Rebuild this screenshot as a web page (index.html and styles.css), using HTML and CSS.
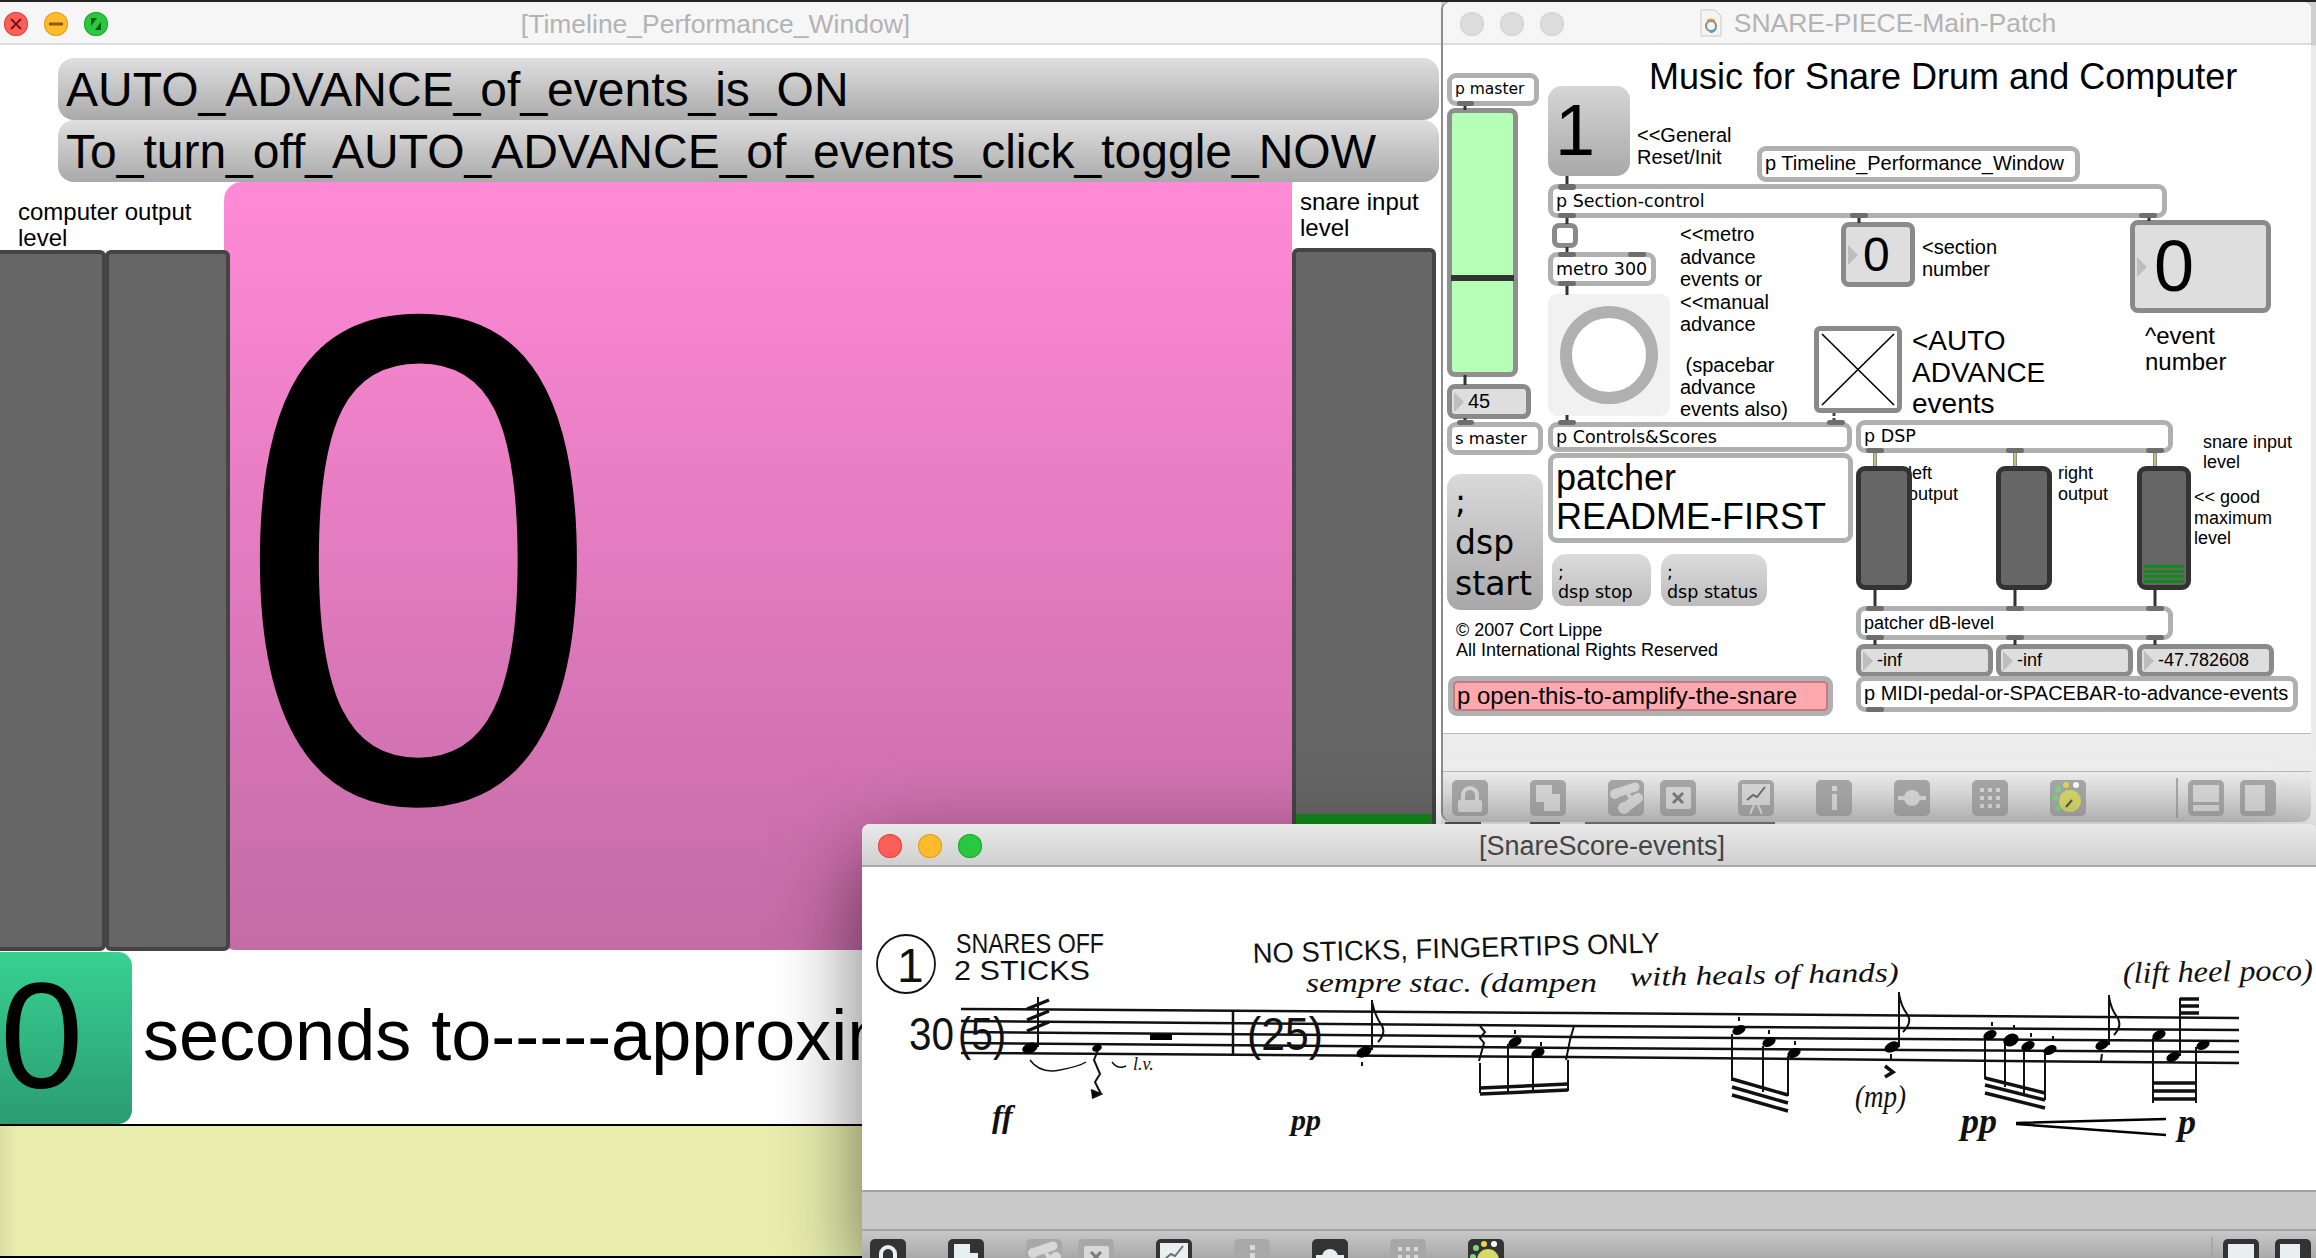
FILE: index.html
```html
<!DOCTYPE html>
<html lang="en">
<head>
  <meta charset="UTF-8" />
  <title>Music for Snare Drum and Computer</title>
  <link rel="stylesheet" href="styles.css">
</head>
<body>

  <!-- toolbar glyphs, shared by both patcher windows -->
  <svg class="defs" aria-hidden="true">
    <symbol id="i-lock" viewBox="0 0 36 36">
      <path d="M11 21v-6a7 7 0 0 1 14 0v6" fill="none" stroke="currentColor" stroke-width="4"/>
      <rect x="6" y="20" width="24" height="12" rx="2" fill="currentColor"/>
    </symbol>
    <symbol id="i-new" viewBox="0 0 36 36">
      <path d="M6 5h16v9h8v17H14v-9H6z" fill="currentColor"/>
    </symbol>
    <symbol id="i-bino" viewBox="0 0 36 36">
      <path d="M9 13L27 7" stroke="currentColor" stroke-width="9" stroke-linecap="round"/>
      <path d="M18 27L30 18" stroke="currentColor" stroke-width="10" stroke-linecap="round"/>
      <circle cx="7" cy="14" r="5" fill="currentColor"/>
      <circle cx="16" cy="28" r="6" fill="currentColor"/>
      <path d="M20 14l4 6" stroke="currentColor" stroke-width="4"/>
    </symbol>
    <symbol id="i-x" viewBox="0 0 36 36">
      <rect x="6" y="7" width="25" height="22" rx="2" fill="currentColor"/>
      <path d="M13 13l10 10M23 13L13 23" stroke="#7d7d7d" stroke-width="3"/>
    </symbol>
    <symbol id="i-chart" viewBox="0 0 36 36">
      <rect x="4" y="4" width="28" height="21" fill="currentColor"/>
      <path d="M9 20l6-5 4 2 8-10" fill="none" stroke="#6f6f6f" stroke-width="2"/>
      <path d="M16 25l-4 9M20 25l4 9" stroke="currentColor" stroke-width="2"/>
    </symbol>
    <symbol id="i-info" viewBox="0 0 36 36">
      <rect x="16" y="6" width="5" height="5" fill="currentColor"/>
      <rect x="16" y="14" width="5" height="16" fill="currentColor"/>
    </symbol>
    <symbol id="i-debug" viewBox="0 0 36 36">
      <rect x="4" y="16" width="28" height="4" fill="currentColor"/>
      <circle cx="18" cy="18" r="8" fill="currentColor"/>
    </symbol>
    <symbol id="i-grid" viewBox="0 0 36 36">
      <g fill="currentColor">
        <rect x="8" y="8" width="4" height="4"/><rect x="16" y="8" width="4" height="4"/><rect x="24" y="8" width="4" height="4"/>
        <rect x="8" y="16" width="4" height="4"/><rect x="16" y="16" width="4" height="4"/><rect x="24" y="16" width="4" height="4"/>
        <rect x="8" y="24" width="4" height="4"/><rect x="16" y="24" width="4" height="4"/><rect x="24" y="24" width="4" height="4"/>
      </g>
    </symbol>
    <symbol id="i-dial" viewBox="0 0 36 36">
      <circle cx="20" cy="21" r="11" fill="#d8d86a"/>
      <path d="M16 27l6-7" stroke="#555" stroke-width="2"/>
      <circle cx="16" cy="5" r="3" fill="#e8d84a"/>
      <circle cx="26" cy="5" r="3" fill="#fff"/>
      <circle cx="8" cy="9" r="3" fill="#7fd67f"/>
      <circle cx="5" cy="18" r="3" fill="#7fd67f"/>
      <circle cx="8" cy="28" r="3" fill="#7fd67f"/>
    </symbol>
    <symbol id="i-bottom" viewBox="0 0 36 36">
      <rect x="5" y="5" width="26" height="17" fill="currentColor"/>
      <rect x="5" y="25" width="26" height="6" fill="currentColor"/>
    </symbol>
    <symbol id="i-side" viewBox="0 0 36 36">
      <rect x="5" y="5" width="20" height="26" fill="currentColor"/>
    </symbol>
  </svg>

  <div class="top-strip"></div>

  <!-- Timeline window -->
  <section class="window win-timeline">
    <header class="titlebar">
      <div class="lights">
        <span class="light red"><svg viewBox="0 0 24 24"><path d="M7 7l10 10M17 7L7 17" stroke="#7a1512" stroke-width="2"/></svg></span>
        <span class="light yellow"><svg viewBox="0 0 24 24"><path d="M5 12h14" stroke="#8f5a08" stroke-width="3"/></svg></span>
        <span class="light green"><svg viewBox="0 0 24 24"><path d="M7 6h6L7 14zM17 18h-6l6-8z" fill="#0b5a14"/></svg></span>
      </div>
      <div class="title faded">[Timeline_Performance_Window]</div>
    </header>
    <div class="patch">
      <div class="bigmsg bigmsg-1">AUTO_ADVANCE_of_events_is_ON</div>
      <div class="bigmsg bigmsg-2">To_turn_off_AUTO_ADVANCE_of_events_click_toggle_NOW</div>
      <div class="pink"><span class="pink-num">0</span></div>
      <div class="label label-compout">computer output<br>level</div>
      <div class="label label-snarein">snare input<br>level</div>
      <div class="tall-meter meter-a"></div>
      <div class="tall-meter meter-b"></div>
      <div class="tall-meter meter-c"><div class="meter-c-level"></div></div>
      <div class="count-box"><span>0</span></div>
      <div class="seconds">seconds to-----approxim</div>
      <div class="yellow-band"></div>
    </div>
  </section>

  <!-- Main patch window -->
  <section class="window win-main">
    <header class="titlebar">
      <div class="lights">
        <span class="light off"></span>
        <span class="light off"></span>
        <span class="light off"></span>
      </div>
      <div class="title title-main faded">
        <svg class="doc-icon" viewBox="0 0 22 28">
          <path d="M1 1h14l6 6v20H1z" fill="#f4f4f4" stroke="#c9c9c9"/>
          <circle cx="11" cy="17" r="5" fill="none" stroke="#8a8a8a" stroke-width="2"/>
          <path d="M7 12a6 6 0 0 1 8 0" fill="none" stroke="#d9a23a" stroke-width="2"/>
          <path d="M16 19a6 6 0 0 1-6 4" fill="none" stroke="#4aa3c9" stroke-width="2"/>
        </svg>
        SNARE-PIECE-Main-Patch
      </div>
    </header>
    <div class="patch">
      <div class="heading">Music for Snare Drum and Computer</div>

      <div class="obj lucida o-pmaster">p master</div>
      <div class="slider o-slider"><div class="knob"></div></div>
      <div class="num o-45"><i></i>45</div>
      <div class="obj lucida o-smaster">s master</div>

      <div class="msg o-one">1</div>
      <div class="note o-general">&lt;&lt;General<br>Reset/Init</div>
      <div class="obj o-ptimeline">p Timeline_Performance_Window</div>
      <div class="obj lucida o-section">p Section-control</div>
      <div class="tgl o-tgl"></div>
      <div class="obj lucida o-metro">metro 300</div>
      <div class="bang o-bang"><div class="bang-ring"></div></div>
      <div class="note o-metronote">&lt;&lt;metro<br>advance<br>events or<br>&lt;&lt;manual<br>advance</div>
      <div class="note o-spacebar">&nbsp;(spacebar<br>advance<br>events also)</div>

      <div class="num num-mid o-sec0"><i></i>0</div>
      <div class="note o-secnote">&lt;section<br>number</div>
      <div class="num num-big o-ev0"><i></i>0</div>
      <div class="note note-24 o-evnote">^event<br>number</div>

      <div class="xbox o-xbox">
        <svg viewBox="0 0 78 77" preserveAspectRatio="none"><path d="M3 3l72 71M75 3L3 74" stroke="#000" stroke-width="1.6"/></svg>
      </div>
      <div class="note note-28 o-autonote">&lt;AUTO<br>ADVANCE<br>events</div>

      <div class="obj lucida o-controls">p Controls&amp;Scores</div>
      <div class="obj lucida o-dsp">p DSP</div>
      <div class="obj o-readme">patcher<br>README-FIRST</div>

      <div class="msg msg-dsp o-dspstart">;<br>dsp<br>start</div>
      <div class="msg msg-small o-dspstop">;<br>dsp stop</div>
      <div class="msg msg-small o-dspstatus">;<br>dsp status</div>

      <div class="note note-18 o-copy">© 2007 Cort Lippe<br>All International Rights Reserved</div>
      <div class="obj o-red">p open-this-to-amplify-the-snare</div>

      <div class="note note-18 o-leftnote">left<br>output</div>
      <div class="note note-18 o-rightnote">right<br>output</div>
      <div class="note note-18 o-snarenote">snare input<br>level</div>
      <div class="note note-18 o-goodnote">&lt;&lt; good<br>maximum<br>level</div>

      <div class="meter o-m1"></div>
      <div class="meter o-m2"></div>
      <div class="meter o-m3"><b></b><b></b><b></b><b></b></div>

      <div class="obj lucida-ish o-db">patcher dB-level</div>
      <div class="num num-small o-inf1"><i></i>-inf</div>
      <div class="num num-small o-inf2"><i></i>-inf</div>
      <div class="num num-small o-inf3"><i></i>-47.782608</div>
      <div class="obj o-midi">p MIDI-pedal-or-SPACEBAR-to-advance-events</div>

      <!-- patch cords and inlets/outlets, in page coordinates -->
      <svg class="cords" viewBox="1443 45 868 686">
        <g stroke="#333" stroke-width="3">
          <path d="M1465 104v6M1465 375v10M1465 418v6"/>
          <path d="M1567 176v10M1567 218v6M1567 247v7M1567 285v10M1567 415v8"/>
          <path d="M1859 217v6M2149 217v4"/>
          <path d="M1875 590v17M2015 590v17M2155 590v17"/>
          <path d="M1875 639v6M2015 639v6M2155 639v6"/>
        </g>
        <path d="M1834 413v10" stroke="#444" stroke-width="3" stroke-dasharray="3 2"/>
        <g stroke="#666" stroke-width="3.5">
          <path d="M1875 453v13M2015 453v13M2155 453v13"/>
        </g>
        <g stroke="#d6e67c" stroke-width="1.5">
          <path d="M1875 453v13M2015 453v13M2155 453v13"/>
        </g>
        <g fill="#6e6e6e">
          <rect x="1457" y="101" width="17" height="5" rx="2.5"/>
          <rect x="1457" y="420" width="17" height="5" rx="2.5"/>
          <rect x="1558" y="184" width="18" height="6" rx="3"/>
          <rect x="1558" y="213" width="18" height="5" rx="2.5"/>
          <rect x="1850" y="213" width="18" height="5" rx="2.5"/>
          <rect x="2139" y="213" width="18" height="5" rx="2.5"/>
          <rect x="1558" y="252" width="18" height="5" rx="2.5"/>
          <rect x="1628" y="252" width="18" height="5" rx="2.5"/>
          <rect x="1558" y="281" width="18" height="5" rx="2.5"/>
          <rect x="1558" y="420" width="18" height="5" rx="2.5"/>
          <rect x="1827" y="420" width="18" height="5" rx="2.5"/>
          <rect x="1866" y="448" width="18" height="5" rx="2.5"/>
          <rect x="2006" y="448" width="18" height="5" rx="2.5"/>
          <rect x="2146" y="448" width="18" height="5" rx="2.5"/>
          <rect x="1866" y="606" width="18" height="5" rx="2.5"/>
          <rect x="2006" y="606" width="18" height="5" rx="2.5"/>
          <rect x="2146" y="606" width="18" height="5" rx="2.5"/>
          <rect x="1866" y="635" width="18" height="5" rx="2.5"/>
          <rect x="2006" y="635" width="18" height="5" rx="2.5"/>
          <rect x="2146" y="635" width="18" height="5" rx="2.5"/>
          <rect x="1866" y="707" width="18" height="5" rx="2.5"/>
        </g>
      </svg>
    </div>
    <div class="status-panel"></div>
    <footer class="toolbar toolbar-faded">
      <div class="tool"><svg><use href="#i-lock"/></svg></div>
      <div class="tool"><svg><use href="#i-new"/></svg></div>
      <div class="tool tool-tight"><svg><use href="#i-bino"/></svg></div>
      <div class="tool"><svg><use href="#i-x"/></svg></div>
      <div class="tool"><svg><use href="#i-chart"/></svg></div>
      <div class="tool"><svg><use href="#i-info"/></svg></div>
      <div class="tool"><svg><use href="#i-debug"/></svg></div>
      <div class="tool"><svg><use href="#i-grid"/></svg></div>
      <div class="tool tool-dial"><svg><use href="#i-dial"/></svg></div>
      <div class="tool-sep"></div>
      <div class="tool tool-small-gap"><svg><use href="#i-bottom"/></svg></div>
      <div class="tool tool-last"><svg><use href="#i-side"/></svg></div>
    </footer>
  </section>
  <div class="sliver"></div>

  <!-- Score window -->
  <section class="window win-score">
    <header class="titlebar titlebar-active">
      <div class="lights lights-score">
        <span class="light red"></span>
        <span class="light yellow"></span>
        <span class="light green"></span>
      </div>
      <div class="title">[SnareScore-events]</div>
    </header>
    <svg class="score" viewBox="862 867 1454 323">
      <g class="staff">
        <path d="M961 1009L1574 1013L2239 1018"/>
        <path d="M961 1021L1574 1026L2239 1030"/>
        <path d="M961 1032L1574 1037L2239 1041"/>
        <path d="M961 1043L1574 1048L2239 1052"/>
        <path d="M961 1053L1574 1057L2239 1063"/>
        <path d="M1233 1010v46"/>
      </g>

      <!-- handwritten directions -->
      <circle cx="906" cy="964" r="29" class="thin"/>
      <text x="897" y="982" class="hand h-one">1</text>
      <text x="956" y="953" class="hand h-caps" textLength="148" lengthAdjust="spacingAndGlyphs">SNARES OFF</text>
      <text x="954" y="980" class="hand h-caps" textLength="136" lengthAdjust="spacingAndGlyphs">2 STICKS</text>
      <text transform="translate(1253 963) rotate(-1.5)" class="hand h-caps" textLength="407" lengthAdjust="spacingAndGlyphs">NO STICKS, FINGERTIPS ONLY</text>
      <text x="1306" y="992" class="script" textLength="291" lengthAdjust="spacingAndGlyphs">sempre stac. (dampen</text>
      <text transform="translate(1630 986) rotate(-1)" class="script" textLength="269" lengthAdjust="spacingAndGlyphs">with heals of hands)</text>
      <text transform="translate(2123 983) rotate(-1)" class="script script-tall" textLength="190" lengthAdjust="spacingAndGlyphs">(lift heel poco)</text>

      <text x="909" y="1050" class="hand h-num" textLength="45" lengthAdjust="spacingAndGlyphs">30</text>
      <text x="958" y="1050" class="hand h-num" textLength="48" lengthAdjust="spacingAndGlyphs">(5)</text>
      <text x="1247" y="1050" class="hand h-num" textLength="76" lengthAdjust="spacingAndGlyphs">(25)</text>
      <text x="1133" y="1070" class="script script-small">l.v.</text>

      <text x="992" y="1127" class="dyn dyn-ff">ff</text>
      <text x="1291" y="1130" class="dyn dyn-small">pp</text>
      <text x="1855" y="1107" class="script dyn-mp" textLength="51" lengthAdjust="spacingAndGlyphs">(mp)</text>
      <text x="1961" y="1133" class="dyn">pp</text>
      <text x="2178" y="1134" class="dyn">p</text>

      <!-- first bar: note with tremolo, tie and grace note -->
      <g class="stem">
        <path d="M1038 997v50"/>
        <path d="M1027 1009l22-9M1027 1020l22-9M1027 1031l22-9" class="beam"/>
        <path d="M1098 1050l-4 10 6 14-5 8 6 12" fill="none"/>
        <path d="M1091 1090l10 4-9 4"/>
        <path d="M1030 1060q10 14 30 10t26-8" fill="none" class="fine"/>
        <path d="M1112 1062q6 8 14 4" fill="none" class="fine"/>
      </g>
      <ellipse cx="1030" cy="1048" rx="8" ry="5" transform="rotate(-20 1030 1048)"/>
      <ellipse cx="1097" cy="1048" rx="5" ry="3.5" transform="rotate(-20 1097 1048)"/>
      <rect x="1150" y="1034" width="22" height="6"/>

      <!-- second bar -->
      <g class="stem">
        <path d="M1372 1000v50M1372 1002q3 14 9 22t-3 18" fill="none"/>
        <path d="M1362 1062v4"/>
        <path d="M1480 1063v30M1508 1044v48M1533 1054v37M1568 1060v31"/>
        <path d="M1480 1026l5 6-5 6 4 5-5 18M1574 1026l-4 14-4 20" fill="none"/>
        <path d="M1480 1088l88-4M1480 1094l88-4" class="beam"/>
        <path d="M1515 1030v4M1541 1042v4"/>

        <path d="M1732 1034v47M1763 1046v46M1788 1056v40"/>
        <path d="M1732 1079l56 16M1732 1087l56 16M1732 1095l56 16" class="beam"/>
        <path d="M1739 1017v4M1769 1030v4M1795 1041v4"/>

        <path d="M1899 992v55M1899 994q2 12 8 20t-4 18" fill="none"/>
        <path d="M1891 1054v6"/>
        <path d="M1885 1066l8 6-8 5" fill="none" class="beam"/>

        <path d="M1985 1037v42M2005 1043v44M2024 1049v44M2045 1054v46"/>
        <path d="M1985 1078l60 15M1985 1085l60 15M1985 1093l60 15" class="beam"/>
        <path d="M1992 1022v4M2014 1025v4M2031 1033v4M2053 1036v4"/>

        <path d="M2109 995v50M2109 997q2 12 8 20t-3 18" fill="none"/>
        <path d="M2102 1054l-1 7"/>

        <path d="M2153 1038v65M2196 1047v56M2180 998v58"/>
        <path d="M2153 1083h43M2153 1091h43M2153 1099h43" class="beam"/>
        <path d="M2180 999h19M2180 1006h19M2180 1013h19" class="beam"/>
      </g>
      <g>
        <ellipse cx="1364" cy="1052" rx="8" ry="5" transform="rotate(-25 1364 1052)"/>
        <ellipse cx="1515" cy="1042" rx="7" ry="4.5" transform="rotate(-25 1515 1042)"/>
        <ellipse cx="1538" cy="1053" rx="7" ry="4.5" transform="rotate(-25 1538 1053)"/>
        <ellipse cx="1739" cy="1030" rx="7" ry="4.5" transform="rotate(-25 1739 1030)"/>
        <ellipse cx="1769" cy="1042" rx="7" ry="4.5" transform="rotate(-25 1769 1042)"/>
        <ellipse cx="1794" cy="1053" rx="7" ry="4.5" transform="rotate(-25 1794 1053)"/>
        <ellipse cx="1892" cy="1047" rx="8" ry="5" transform="rotate(-25 1892 1047)"/>
        <ellipse cx="1990" cy="1035" rx="7" ry="4.5" transform="rotate(-25 1990 1035)"/>
        <ellipse cx="2011" cy="1040" rx="8" ry="6" transform="rotate(-25 2011 1040)"/>
        <ellipse cx="2028" cy="1046" rx="7" ry="4.5" transform="rotate(-25 2028 1046)"/>
        <ellipse cx="2050" cy="1050" rx="7" ry="4.5" transform="rotate(-25 2050 1050)"/>
        <ellipse cx="2102" cy="1045" rx="7" ry="4.5" transform="rotate(-25 2102 1045)"/>
        <ellipse cx="2159" cy="1035" rx="7" ry="4.5" transform="rotate(-25 2159 1035)"/>
        <ellipse cx="2173" cy="1057" rx="7" ry="4.5" transform="rotate(-25 2173 1057)"/>
        <ellipse cx="2203" cy="1045" rx="7" ry="4.5" transform="rotate(-25 2203 1045)"/>
      </g>
      <path d="M2016 1123L2166 1119M2016 1124L2166 1135" stroke="#000" stroke-width="2.5" fill="none"/>
    </svg>
    <div class="status-panel status-panel-score"></div>
    <footer class="toolbar toolbar-score">
      <div class="tool tool-on"><svg><use href="#i-lock"/></svg></div>
      <div class="tool tool-on"><svg><use href="#i-new"/></svg></div>
      <div class="tool tool-tight"><svg><use href="#i-bino"/></svg></div>
      <div class="tool"><svg><use href="#i-x"/></svg></div>
      <div class="tool tool-on"><svg><use href="#i-chart"/></svg></div>
      <div class="tool"><svg><use href="#i-info"/></svg></div>
      <div class="tool tool-on"><svg><use href="#i-debug"/></svg></div>
      <div class="tool"><svg><use href="#i-grid"/></svg></div>
      <div class="tool tool-on tool-dial"><svg><use href="#i-dial"/></svg></div>
      <div class="tool-sep"></div>
      <div class="tool tool-on tool-small-gap"><svg><use href="#i-bottom"/></svg></div>
      <div class="tool tool-on tool-last"><svg><use href="#i-side"/></svg></div>
    </footer>
  </section>

</body>
</html>
```

FILE: styles.css
```css
* { box-sizing: border-box; }
html, body { margin: 0; height: 100%; }
body {
  position: relative;
  width: 2316px;
  height: 1258px;
  overflow: hidden;
  background: linear-gradient(#cfcfcf 45px, #ececec 46px);
  font-family: "Liberation Sans", Arial, sans-serif;
  color: #000;
}
.defs { position: absolute; width: 0; height: 0; }
.top-strip { position: absolute; left: 0; top: 0; right: 0; height: 2px; background: #222; }

/* Windows sit on a free desktop */
.window {
  position: absolute;
  display: flex;
  flex-direction: column;
  overflow: hidden;
  background: #fff;
}
.win-timeline { left: 0; top: 2px; width: 1441px; height: 1256px; }
.win-main {
  left: 1443px;
  top: 2px;
  width: 868px;
  height: 820px;
  border-radius: 8px 8px 10px 10px;
  box-shadow: -2px 0 0 #8c8c8c;
}
.win-score {
  left: 862px;
  top: 824px;
  width: 1454px;
  height: 434px;
  border-radius: 8px 8px 0 0;
  box-shadow: 0 30px 85px rgba(0,0,0,0.55);
}
.sliver {
  position: absolute;
  left: 1445px;
  top: 822px;
  width: 330px;
  height: 2px;
  background:
    linear-gradient(90deg, #555 0 36px, transparent 36px 85px, #555 85px 115px, transparent 115px 140px, #777 140px 330px);
}

.titlebar {
  position: relative;
  flex: none;
  height: 43px;
  background: #f6f6f6;
  border-bottom: 2px solid #dcdcdc;
}
.titlebar-active {
  background: linear-gradient(#e9e9e9, #d0d0d0);
  border-bottom: 2px solid #a9a9a9;
}
.lights { position: absolute; left: 4px; top: 10px; display: flex; gap: 16px; }
.win-main .lights { left: 17px; }
.lights-score { left: 16px; top: 10px; }
.light { display: block; width: 24px; height: 24px; border-radius: 50%; }
.light svg { display: block; width: 24px; height: 24px; }
.light.red { background: #fc5f57; box-shadow: inset 0 0 0 1px #df4640; }
.light.yellow { background: #febb2e; box-shadow: inset 0 0 0 1px #dd9e22; }
.light.green { background: #28c840; box-shadow: inset 0 0 0 1px #1eaa2f; }
.light.off { background: #dcdcdc; box-shadow: inset 0 0 0 1px #d2d2d2; }
.title {
  height: 41px;
  line-height: 44px;
  text-align: center;
  font-size: 26.5px;
  color: #444;
}
.title.faded { color: #b3b3b3; }
.win-timeline .title { padding-right: 10px; }
.win-score .title { padding-left: 26px; font-size: 27px; }
.title-main {
  display: flex;
  justify-content: center;
  align-items: center;
  gap: 12px;
  padding-left: 2px;
}
.doc-icon { width: 22px; height: 28px; }

/* Patcher canvas: everything inside is a placed object */
.patch { position: relative; flex: 1; overflow: hidden; background: #fff; }

/* Timeline window objects */
.bigmsg {
  position: absolute;
  left: 58px;
  width: 1381px;
  height: 62px;
  padding-left: 8px;
  line-height: 63px;
  font-size: 48px;
  white-space: nowrap;
  border-radius: 16px;
  background: linear-gradient(#dfdfdf, #a9a9a9);
}
.bigmsg-1 { top: 13px; }
.bigmsg-2 { top: 75px; }
.pink {
  position: absolute;
  left: 224px;
  top: 137px;
  width: 1068px;
  height: 768px;
  display: flex;
  align-items: center;
  border-radius: 18px 0 0 10px;
  background: linear-gradient(#ff8ad6, #c46ba6);
}
.pink-num {
  margin: -14px 0 0 10px;
  font-size: 698px;
  line-height: 1;
  transform: scaleX(0.95);
  transform-origin: left center;
}
.label { position: absolute; font-size: 24px; line-height: 26px; }
.label-compout { left: 18px; top: 154px; }
.label-snarein { left: 1300px; top: 144px; }
.tall-meter {
  position: absolute;
  top: 205px;
  height: 701px;
  background: #666;
  border: 4px solid #444;
  border-radius: 6px;
}
.meter-a { left: -10px; width: 116px; }
.meter-b { left: 105px; width: 125px; }
.meter-c {
  left: 1292px;
  top: 203px;
  width: 144px;
  height: 800px;
}
.meter-c-level {
  position: absolute;
  left: 0;
  right: 0;
  top: 562px;
  height: 60px;
  background: #118a1a;
}
.count-box {
  position: absolute;
  left: 0;
  top: 907px;
  width: 132px;
  height: 172px;
  border-radius: 0 14px 14px 0;
  background: linear-gradient(#38d191, #2a9c72);
  font-size: 150px;
  line-height: 168px;
}
.seconds {
  position: absolute;
  left: 143px;
  top: 907px;
  height: 172px;
  line-height: 167px;
  font-size: 72px;
  white-space: nowrap;
}
.yellow-band {
  position: absolute;
  left: 0;
  right: 0;
  top: 1079px;
  height: 134px;
  border-top: 2px solid #000;
  border-bottom: 2px solid #000;
  background: linear-gradient(90deg, #dcdca2, #e9eeae 18px);
}

/* Main patch objects */
.heading {
  position: absolute;
  left: 206px;
  top: 11px;
  font-size: 36px;
  line-height: 42px;
  white-space: nowrap;
}
.obj {
  position: absolute;
  padding-left: 3px;
  background: #fff;
  border: 5px solid #b0b0b0;
  border-radius: 9px;
  white-space: nowrap;
  font-size: 20px;
  line-height: 24px;
}
.lucida { font-family: "DejaVu Sans", sans-serif; font-size: 17.5px; line-height: 24px; }
.lucida-ish { font-size: 18px; }
.note { position: absolute; font-size: 20px; line-height: 22px; white-space: nowrap; }
.note-18 { font-size: 18px; line-height: 20.5px; }
.note-24 { font-size: 24px; line-height: 26px; }
.note-28 { font-size: 28px; line-height: 31.5px; }
.msg {
  position: absolute;
  background: linear-gradient(#d6d6d6, #a9a9a9);
  border-radius: 14px;
}
.msg-dsp {
  padding: 7px 0 0 8px;
  font-family: "DejaVu Sans", sans-serif;
  font-size: 33px;
  line-height: 41px;
  background: linear-gradient(#dadada, #a8a8a8);
}
.msg-small {
  padding: 8px 0 0 6px;
  font-family: "DejaVu Sans", sans-serif;
  font-size: 17.5px;
  line-height: 20px;
  background: linear-gradient(#dcdcdc, #bcbcbc);
  white-space: nowrap;
}
.num {
  position: absolute;
  background: #dedede;
  border: 5px solid #8a8a8a;
  border-radius: 8px;
  font-size: 22px;
  line-height: 25px;
  padding-left: 16px;
  white-space: nowrap;
}
.num i {
  position: absolute;
  left: 2px;
  top: 50%;
  margin-top: -10px;
  border-left: 10px solid #bdbdbd;
  border-top: 10px solid transparent;
  border-bottom: 10px solid transparent;
}
.num-mid { font-size: 48px; line-height: 55px; padding-left: 17px; }
.num-big { font-size: 72px; line-height: 83px; padding-left: 19px; }
.num-small { font-size: 18px; line-height: 23px; padding-left: 16px; }
.slider {
  position: absolute;
  background: #b6ffb6;
  border: 5px solid #8f8f8f;
  border-radius: 8px;
}
.knob { position: absolute; left: -1px; right: -1px; top: 162px; height: 6px; background: #333; }
.tgl { position: absolute; background: #fff; border: 5px solid #8a8a8a; border-radius: 7px; }
.bang { position: absolute; display: flex; align-items: center; justify-content: center; background: #f1f1f1; border-radius: 9px; }
.bang-ring { width: 98px; height: 98px; background: #fff; border: 12px solid #b0b0b0; border-radius: 50%; }
.xbox { position: absolute; background: #fff; border: 5px solid #8a8a8a; border-radius: 6px; }
.xbox svg { display: block; width: 100%; height: 100%; }
.meter {
  position: absolute;
  top: 421px;
  width: 56px;
  height: 124px;
  padding-top: 94px;
  background: #666;
  border: 5px solid #333;
  border-radius: 9px;
}
.meter b { display: block; height: 3px; margin: 0 2px 2px; background: #118a1a; }
.cords { position: absolute; left: 0; top: 0; width: 868px; height: 686px; pointer-events: none; }

.o-pmaster { left: 4px; top: 28px; width: 92px; height: 33px; font-size: 15.5px; line-height: 22px; }
.o-slider { left: 4px; top: 63px; width: 71px; height: 269px; }
.o-45 { left: 4px; top: 339px; width: 84px; height: 35px; font-size: 20px; }
.o-smaster { left: 4px; top: 377px; width: 96px; height: 33px; font-size: 16.5px; line-height: 23px; }
.o-one {
  left: 105px;
  top: 41px;
  width: 82px;
  height: 90px;
  padding-left: 7px;
  font-size: 72px;
  line-height: 88px;
}
.o-general { left: 194px; top: 79px; }
.o-ptimeline { left: 314px; top: 101px; width: 323px; height: 36px; }
.o-section { left: 105px; top: 139px; width: 619px; height: 34px; }
.o-tgl { left: 109px; top: 178px; width: 26px; height: 25px; }
.o-metro { left: 105px; top: 207px; width: 108px; height: 34px; }
.o-bang { left: 105px; top: 249px; width: 122px; height: 122px; }
.o-metronote { left: 237px; top: 178px; line-height: 22.5px; }
.o-spacebar { left: 237px; top: 309px; }
.o-sec0 { left: 398px; top: 177px; width: 74px; height: 65px; }
.o-secnote { left: 479px; top: 191px; }
.o-ev0 { left: 687px; top: 175px; width: 141px; height: 93px; }
.o-evnote { left: 702px; top: 278px; }
.o-xbox { left: 371px; top: 281px; width: 88px; height: 87px; }
.o-autonote { left: 469px; top: 280px; }
.o-controls { left: 105px; top: 377px; width: 304px; height: 30px; line-height: 20px; }
.o-dsp { left: 413px; top: 375px; width: 317px; height: 33px; line-height: 22px; }
.o-readme { left: 105px; top: 408px; width: 305px; height: 90px; padding-top: 0; font-size: 36px; line-height: 39px; }
.o-dspstart { left: 4px; top: 429px; width: 96px; height: 136px; }
.o-dspstop { left: 109px; top: 509px; width: 99px; height: 52px; }
.o-dspstatus { left: 218px; top: 509px; width: 106px; height: 52px; }
.o-copy { left: 13px; top: 575px; line-height: 20px; }
.o-red {
  left: 5px;
  top: 631px;
  width: 385px;
  height: 40px;
  padding-left: 4px;
  font-size: 24px;
  line-height: 29px;
  background: #ffa9ae;
  border-color: #b0b0b0;
  box-shadow: inset 0 0 0 2px #c57a80;
}
.o-leftnote { left: 465px; top: 418px; }
.o-rightnote { left: 615px; top: 418px; }
.o-snarenote { left: 760px; top: 387px; line-height: 20px; }
.o-goodnote { left: 751px; top: 442px; }
.o-m1 { left: 413px; }
.o-m2 { left: 553px; }
.o-m3 { left: 694px; width: 54px; }
.o-db { left: 413px; top: 561px; width: 317px; height: 34px; }
.o-inf1 { left: 413px; top: 599px; width: 137px; height: 33px; }
.o-inf2 { left: 553px; top: 599px; width: 137px; height: 33px; }
.o-inf3 { left: 694px; top: 599px; width: 137px; height: 33px; }
.o-midi { left: 413px; top: 631px; width: 442px; height: 36px; line-height: 25px; }

/* Bottom bars */
.status-panel {
  flex: none;
  height: 39px;
  background: #ededed;
  border-top: 1px solid #b9b9b9;
  border-bottom: 1px solid #b9b9b9;
}
.status-panel-score {
  background: #c9c9c9;
  border-top: 2px solid #a3a3a3;
  border-bottom: 2px solid #a3a3a3;
  height: 41px;
}
.toolbar {
  flex: none;
  display: flex;
  align-items: flex-start;
  height: 50px;
  padding: 8px 0 0 9px;
  background: linear-gradient(#ededed, #c5c5c5);
}
.toolbar-score {
  height: 28px;
  padding-left: 8px;
  background: linear-gradient(#c8c8c8, #a8a8a8);
}
.tool {
  flex: none;
  width: 36px;
  height: 36px;
  margin-right: 42px;
  border-radius: 5px;
  background: #a8a8a8;
  color: #d8d8d8;
}
.tool svg { display: block; width: 36px; height: 36px; }
.tool-tight { margin-right: 16px; }
.tool-on { background: #333; color: #e9eeee; }
.tool-dial { margin-right: 0; }
.tool-sep { flex: none; width: 2px; height: 40px; margin: -2px 10px 0 auto; background: #a8a8a8; }
.tool-small-gap { margin-right: 16px; }
.tool-last { margin-right: 35px; }
.toolbar-score .tool-last { margin-right: 5px; }

/* Score */
.score { display: block; flex: none; width: 1454px; height: 323px; background: #fff; }
.staff path { fill: none; stroke: #111; stroke-width: 2.5; }
.thin { fill: none; stroke: #111; stroke-width: 1.8; }
.stem path { stroke: #111; stroke-width: 2; }
.stem .beam { stroke-width: 3.5; }
.stem .fine { stroke-width: 1.5; }
.hand { font-family: "Liberation Sans", sans-serif; fill: #111; }
.h-caps { font-size: 28px; }
.h-one { font-size: 48px; }
.h-num { font-size: 46px; }
.script { font-family: "Liberation Serif", serif; font-style: italic; font-size: 27px; fill: #111; }
.script-tall { font-size: 30px; }
.script-small { font-size: 18px; }
.dyn { font-family: "Liberation Serif", serif; font-style: italic; font-weight: bold; font-size: 36px; fill: #111; }
.dyn-ff { font-size: 32px; }
.dyn-small { font-size: 30px; }
.dyn-mp { font-size: 32px; }
```
